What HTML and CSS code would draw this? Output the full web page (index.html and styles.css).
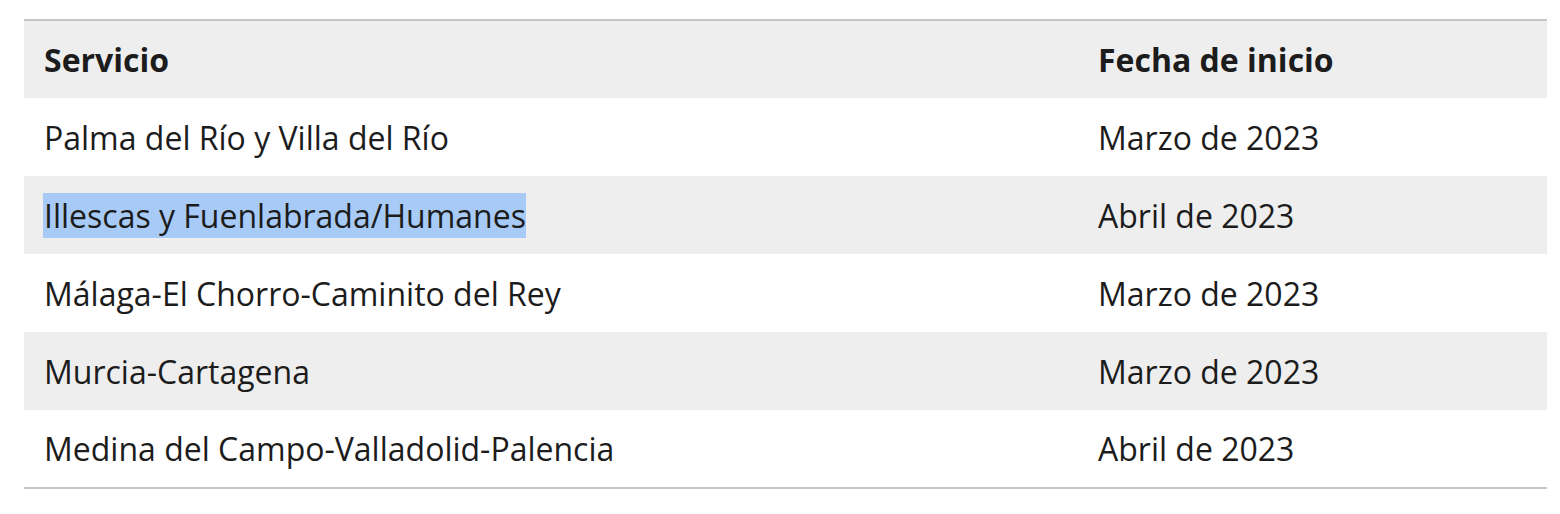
FILE: index.html
```html
<!DOCTYPE html>
<html lang="es">
<head>
<meta charset="utf-8">
<link rel="stylesheet" href="styles.css">
</head>
<body>
<table class="services">
  <thead>
    <tr><th class="col-service">Servicio</th><th class="col-date">Fecha de inicio</th></tr>
  </thead>
  <tbody>
    <tr><td>Palma del Río y Villa del Río</td><td>Marzo de 2023</td></tr>
    <tr><td><span class="selected">Illescas y Fuenlabrada/Humanes</span></td><td>Abril de 2023</td></tr>
    <tr><td>Málaga-El Chorro-Caminito del Rey</td><td>Marzo de 2023</td></tr>
    <tr><td>Murcia-Cartagena</td><td>Marzo de 2023</td></tr>
    <tr><td>Medina del Campo-Valladolid-Palencia</td><td>Abril de 2023</td></tr>
  </tbody>
</table>
</body>
</html>
```
FILE: styles.css
```css
html, body {
  margin: 0;
  padding: 0;
  background: #fff;
}
body {
  padding: 19px 13px 0 24px;
  font-family: "Open Sans", "Liberation Sans", sans-serif;
  color: #1c1c1c;
}
.services {
  width: 1523px;
  border-collapse: collapse;
  border-top: 2px solid #c6c6c6;
  border-bottom: 2px solid #c6c6c6;
  font-size: 32px;
}
.services th,
.services td {
  height: 78px;
  padding: 0 0 0 20px;
  text-align: left;
  vertical-align: middle;
  box-sizing: border-box;
}
.services th {
  font-weight: 700;
  background: #eeeeee;
}
.col-service {
  width: 1054px;
}
.services tbody tr:nth-child(even) td {
  background: #eeeeee;
}
.selected {
  background: #a7cbf6;
  padding: 1px 0 1px 1px;
  margin-left: -1px;
}
```
